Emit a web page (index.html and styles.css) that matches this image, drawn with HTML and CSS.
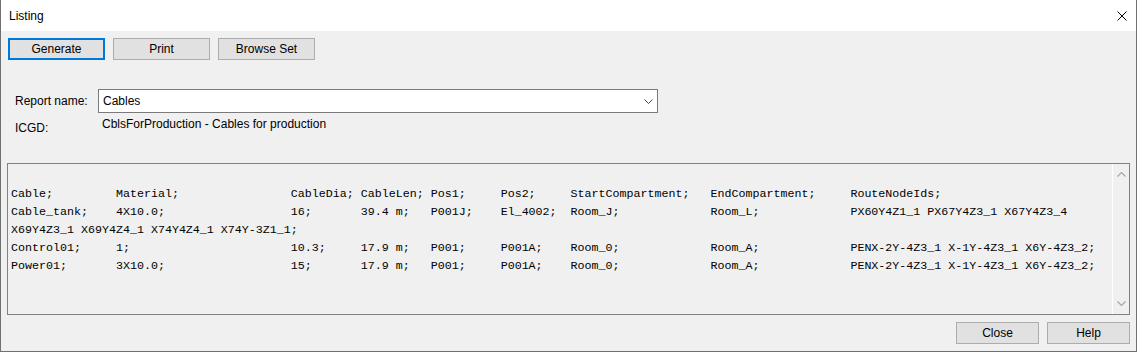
FILE: index.html
```html
<!DOCTYPE html>
<html lang="en">
<head>
<meta charset="UTF-8">
<title>Listing</title>
<link rel="stylesheet" href="styles.css">
</head>
<body>

<div class="window">
    <div class="titlebar">
        <span class="title">Listing</span>
        <svg class="close-x" width="10" height="10" viewBox="0 0 10 10">
            <path d="M0.5 0.5 L9.5 9.5 M9.5 0.5 L0.5 9.5" stroke="#000" stroke-width="1" fill="none"/>
        </svg>
    </div>

    <!-- top buttons -->
    <div class="toolbar">
        <button class="btn btn-default">Generate</button>
        <button class="btn">Print</button>
        <button class="btn">Browse Set</button>
    </div>

    <!-- report selection -->
    <div class="form">
        <div class="row">
            <span class="label">Report name:</span>
            <div class="combo">
                <span>Cables</span>
                <svg width="9" height="5" viewBox="0 0 9 5">
                    <path d="M0.5 0.5 L4.5 4.5 L8.5 0.5" stroke="#444" stroke-width="1" fill="none"/>
                </svg>
            </div>
        </div>
        <div class="row row-icgd">
            <span class="label label-low">ICGD:</span>
            <span class="value">CblsForProduction - Cables for production</span>
        </div>
    </div>

    <!-- listing output -->
    <div class="output">
<pre class="listing">

Cable;         Material;                CableDia; CableLen; Pos1;     Pos2;     StartCompartment;   EndCompartment;     RouteNodeIds;
Cable_tank;    4X10.0;                  16;       39.4 m;   P001J;    El_4002;  Room_J;             Room_L;             PX60Y4Z1_1 PX67Y4Z3_1 X67Y4Z3_4
X69Y4Z3_1 X69Y4Z4_1 X74Y4Z4_1 X74Y-3Z1_1;
Control01;     1;                       10.3;     17.9 m;   P001;     P001A;    Room_0;             Room_A;             PENX-2Y-4Z3_1 X-1Y-4Z3_1 X6Y-4Z3_2;
Power01;       3X10.0;                  15;       17.9 m;   P001;     P001A;    Room_0;             Room_A;             PENX-2Y-4Z3_1 X-1Y-4Z3_1 X6Y-4Z3_2;</pre>
        <div class="scrollbar">
            <svg width="9" height="5" viewBox="0 0 9 5">
                <path d="M0.5 4.5 L4.5 0.5 L8.5 4.5" stroke="#a8a8a8" stroke-width="1.2" fill="none"/>
            </svg>
            <svg width="9" height="5" viewBox="0 0 9 5">
                <path d="M0.5 0.5 L4.5 4.5 L8.5 0.5" stroke="#a8a8a8" stroke-width="1.2" fill="none"/>
            </svg>
        </div>
    </div>

    <!-- bottom buttons -->
    <div class="footer">
        <button class="btn btn-small">Close</button>
        <button class="btn btn-small">Help</button>
    </div>
</div>

</body>
</html>
```

FILE: styles.css
```css
body {
    margin: 0;
    font-family: "Liberation Sans", Arial, sans-serif;
    font-size: 12px;
    color: #000;
}

.window {
    width: 1137px;
    height: 352px;
    box-sizing: border-box;
    background-color: #f0f0f0;
    border: 1px solid #707070;
    border-top: none;
    overflow: hidden;
}

.titlebar {
    height: 31px;
    background-color: #fff;
    display: flex;
    align-items: center;
    justify-content: space-between;
    padding-left: 8px;
    padding-right: 9px;
}

.title {
    margin-top: 1px;
}

.toolbar {
    display: flex;
    gap: 8px;
    margin-top: 7px;
    margin-left: 7px;
}

.btn {
    width: 97px;
    height: 22px;
    box-sizing: border-box;
    background-color: #e1e1e1;
    border: 1px solid #adadad;
    font-family: "Liberation Sans", Arial, sans-serif;
    font-size: 12px;
    color: #000;
    padding: 0;
}

.btn-default {
    border: 2px solid #0078d7;
}

.btn-small {
    width: 83px;
}

.form {
    margin-top: 29px;
    margin-left: 14px;
}

.row {
    display: flex;
    align-items: center;
}

.row-icgd {
    margin-top: 6px;
    height: 16px;
    align-items: flex-start;
}

.label {
    width: 83px;
}

.label-low {
    padding-top: 2px;
}

.value {
    margin-left: 4px;
    margin-top: -2px;
}

.combo {
    width: 560px;
    height: 24px;
    box-sizing: border-box;
    background-color: #fff;
    border: 1px solid #7a7a7a;
    display: flex;
    align-items: center;
    justify-content: space-between;
    padding-left: 4px;
    padding-right: 4px;
}

.output {
    margin: 28px 6px 0 6px;
    height: 152px;
    box-sizing: border-box;
    border: 1px solid #828282;
    display: flex;
}

.listing {
    flex: 1;
    margin: 0;
    padding: 3px 3px;
    font-family: "Liberation Mono", "Courier New", monospace;
    font-size: 11.665px;
    line-height: 18px;
    white-space: pre;
    overflow: hidden;
}

.scrollbar {
    width: 16px;
    border-left: 1px solid #fff;
    display: flex;
    flex-direction: column;
    justify-content: space-between;
    align-items: center;
    padding: 8px 0 8px 0;
}

.footer {
    display: flex;
    justify-content: flex-end;
    gap: 8px;
    margin-top: 7px;
    margin-right: 6px;
}
```
